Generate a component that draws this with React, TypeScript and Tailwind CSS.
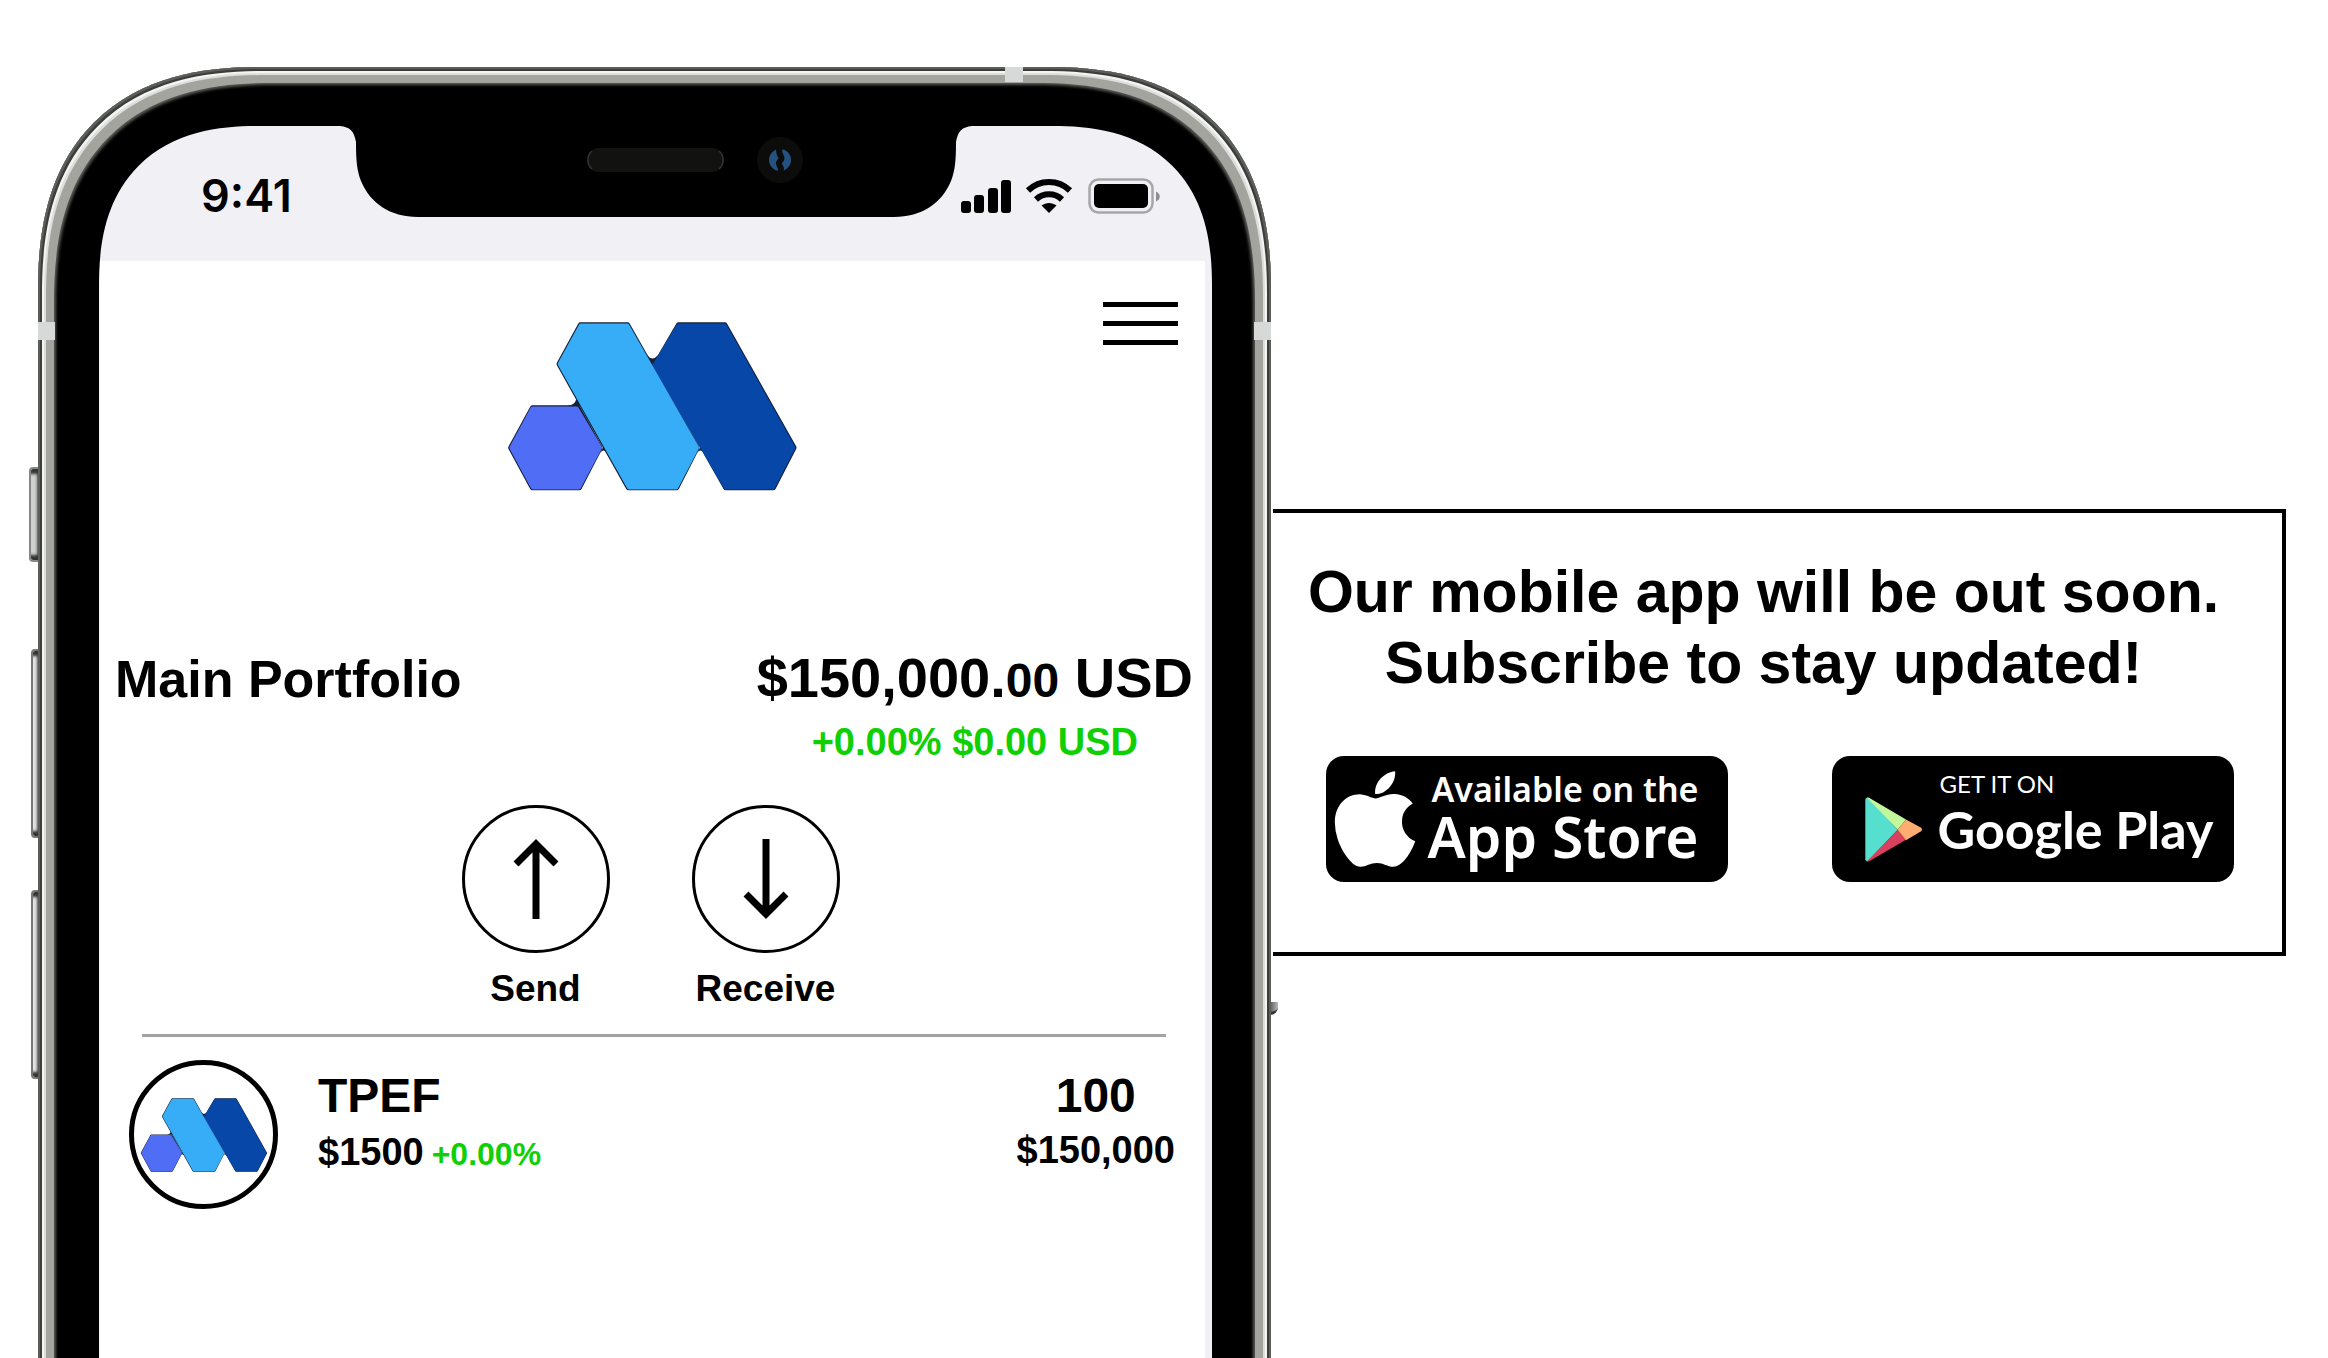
import { FaApple } from "react-icons/fa";

function MLogo({ className }: { className: string }) {
  return (
    <svg className={className} viewBox="87 66 866 507" aria-hidden="true">
      <g fill="#14213a" stroke="#14213a" strokeWidth="16" strokeLinejoin="round">
        <path d="M160 324H296L362 443L300 563H160L95 443Z" />
        <path d="M304 75H445L653 443L592 563H448L240 192Z" />
        <path d="M598 75H737L944 443L882 563H740L530 192Z" />
      </g>
      <path fill="#14213a" d="M262 318Q288 316 291 298L312 318ZM504 164Q519 186 536 166L532 200L510 186ZM360 462Q373 440 388 464L376 436ZM650 462Q664 440 679 464L668 436Z" />
      <g strokeWidth="13" strokeLinejoin="round">
        <path fill="#0747a8" stroke="#0747a8" d="M598 77H736L942 443L881 562H740L526 196Z" />
        <path fill="#506df6" stroke="#506df6" d="M160 326H292L362 443L299 562H161L97 443Z" />
        <path fill="#36adf6" stroke="#36adf6" d="M305 77H444L653 443L591 562H450L242 192Z" />
      </g>
    </svg>
  );
}

function Notch() {
  return (
    <svg className="h-[91px] w-[632px] shrink-0" viewBox="0 0 632 91" aria-hidden="true">
      <path d="M0 0C10 1 14 5 16 16C16 35 17 45 21 55C30 77 50 91 78 91H554C582 91 602 77 611 55C615 45 616 35 616 16C618 5 622 1 632 0Z" />
      <rect x="247" y="22" width="137" height="24" rx="12" fill="#121210" />
      <path d="M252 25A12 12 0 0 0 252 43M379 25A12 12 0 0 1 379 43" fill="none" stroke="#333" strokeWidth="1.5" />
      <circle cx="440" cy="34" r="23" fill="#0c0c0a" />
      <circle cx="440" cy="34" r="11" fill="#24517f" />
      <path d="M440 22C436 28 445 31 440 35C436 39 444 41 440 46" fill="none" stroke="#0c0c0a" strokeWidth="6" />
    </svg>
  );
}

function StatusIcons() {
  return (
    <svg className="h-9 w-[200px]" viewBox="0 0 200 36" role="img" aria-label="Signal, Wi-Fi and battery full">
      <rect x="0" y="23" width="10" height="12" rx="3" />
      <rect x="13" y="17" width="10" height="18" rx="3" />
      <rect x="27" y="10" width="10" height="25" rx="3" />
      <rect x="40" y="2" width="10" height="33" rx="3" />
      <g fill="none" stroke="#000" strokeWidth="6">
        <path d="M67 12.500A30 30 0 0 1 109 12.500" />
        <path d="M75 21.500A19 19 0 0 1 101 21.500" />
      </g>
      <path d="M88 35L80.500 27.500C85 24 91 24 95.500 27.500Z" />
      <rect x="128.500" y="1.500" width="63" height="33" rx="9" fill="none" stroke="#a6a6a8" strokeWidth="2.500" />
      <rect x="133" y="6" width="54" height="24" rx="5" />
      <path d="M195 13.500C200 15.500 200 21.500 195 23.500Z" fill="#8e8e90" />
    </svg>
  );
}

function ArrowIcon({ down = false }: { down?: boolean }) {
  return (
    <svg className="h-20 w-12" viewBox="0 0 48 80" fill="none" stroke="#000" strokeWidth="7" aria-hidden="true">
      {down ? <path d="M24 0V74M4 55L24 75L44 55" /> : <path d="M24 80V6M4 25L24 5L44 25" />}
    </svg>
  );
}

function RoundAction({ label, down }: { label: string; down?: boolean }) {
  return (
    <button type="button" className="flex w-[147px] flex-col items-center">
      <span className="flex size-[148px] items-center justify-center rounded-full border-3 border-black">
        <ArrowIcon down={down} />
      </span>
      <span className="mt-3.5 text-[37px] leading-[44px] font-bold">{label}</span>
    </button>
  );
}

function PlayLogo() {
  return (
    <svg className="h-[65px] w-[57px] shrink-0" viewBox="196 198 171 194" aria-hidden="true">
      <path fill="#56dece" d="M197 206Q197 199 205 200L294 296L205 390Q197 391 197 384Z" />
      <path fill="#c2f79c" d="M201 199Q206 198 212 202L319 265L294 296Z" />
      <path fill="#d8405f" d="M201 391Q206 392 212 388L319 326L294 296Z" />
      <path fill="#ffad70" d="M319 265L363 289Q371 295 363 301L319 327L294 296Z" />
    </svg>
  );
}

function Phone() {
  return (
    <section className="relative z-10 flex flex-col pt-[67px]" aria-label="App preview">
      <span className="absolute top-[467px] -left-[9px] h-[95px] w-3 rounded-l-sm border-2 border-[#888] bg-[#cfd0d0] shadow-[inset_-4px_8px_3px_-3px_#333,inset_-4px_-8px_3px_-3px_#333]" />
      <span className="absolute top-[649px] -left-[7px] h-[189px] w-2.5 rounded-l-sm border-2 border-[#777] bg-[#e2e2e4] shadow-[inset_-4px_8px_3px_-3px_#333,inset_-4px_-8px_3px_-3px_#333]" />
      <span className="absolute top-[890px] -left-[7px] h-[189px] w-2.5 rounded-l-sm border-2 border-[#777] bg-[#e2e2e4] shadow-[inset_-4px_8px_3px_-3px_#333,inset_-4px_-8px_3px_-3px_#333]" />
      <span className="absolute top-[1002px] -right-[7px] h-[13px] w-3 rounded-br-lg border-b-3 border-[#333] bg-gradient-to-r from-[#333] to-[#bbb]" />
      <div className="relative -mb-[30px] flex grow flex-col rounded-t-[225px] bg-black pt-[59px] pr-[59px] pl-[61px] shadow-[inset_0_0_0_2px_#5c5e5a,inset_0_0_0_4px_#3c3e3a,inset_0_0_0_6px_#f4f4f4,inset_0_0_0_8px_#dededd,inset_0_0_0_16px_#a3a49e,inset_0_0_3px_18px_#5a5b57] [corner-shape:superellipse(1.28)]">
        <span className="absolute top-0 right-[248px] h-[15px] w-[18px] bg-[#d6d9d7]" />
        <span className="absolute top-[255px] left-0 h-[18px] w-[17px] bg-[#d6d9d7]" />
        <span className="absolute top-[255px] right-0 h-[18px] w-[17px] bg-[#d6d9d7]" />
        <div className="flex grow flex-col overflow-hidden rounded-t-[160px] bg-[#f1f0f5] pr-[7px] pl-px [corner-shape:superellipse(1.28)]">
          <div className="-mr-[7px] -ml-px grid h-[135px] grid-cols-[minmax(0,1fr)_auto_minmax(0,1fr)]">
            <p className="pt-11 pl-[102px] font-['Inter',sans-serif] text-[45px] leading-[52px] font-semibold">9:41</p>
            <Notch />
            <div className="flex justify-end pt-[52px] pr-[51px]">
              <div className="shrink-0">
                <StatusIcons />
              </div>
            </div>
          </div>
          <div className="flex grow flex-col bg-white">
            <header className="grid grid-cols-[1fr_auto_1fr] items-start pt-[41px]">
              <MLogo className="col-start-2 mt-5 h-[169px] w-[289px]" />
              <button type="button" aria-label="Menu" className="mr-[27px] flex w-[75px] flex-col gap-[14px] justify-self-end">
                <span className="h-[5px] bg-black" />
                <span className="h-[5px] bg-black" />
                <span className="h-[5px] bg-black" />
              </button>
            </header>
            <div className="mt-[155px] flex items-baseline justify-between pr-3 pl-[15px] font-bold">
              <h1 className="text-[52px] leading-[64px]">Main Portfolio</h1>
              <div className="text-center">
                <p className="text-[56px] leading-[64px]">
                  $150,000.<span className="text-[48px] leading-none">00</span> USD
                </p>
                <p className="mt-2 text-[38px] leading-[48px] text-[#10d004]">+0.00% $0.00 USD</p>
              </div>
            </div>
            <div className="mt-[39px] flex justify-center gap-[83px] pr-1">
              <RoundAction label="Send" />
              <RoundAction label="Receive" down />
            </div>
            <hr className="mt-[23px] mr-[39px] ml-[42px] h-[3px] border-0 bg-[#a3a3a3]" />
            <article className="mt-[23px] flex items-start gap-10 pr-[30px] pl-[29px] font-bold">
              <span className="flex size-[149px] shrink-0 items-center justify-center rounded-full border-5 border-black">
                <MLogo className="h-[74px] w-[128px] shrink-0" />
              </span>
              <div className="grow pt-2">
                <h2 className="text-[48px] leading-[56px]">TPEF</h2>
                <p className="mt-1 text-[38px] leading-[48px]">
                  $1500<span className="ml-2 text-[32px] leading-none text-[#10d004]">+0.00%</span>
                </p>
              </div>
              <div className="pt-2 text-center">
                <p className="text-[48px] leading-[56px]">100</p>
                <p className="mt-0.5 text-[38px] leading-[48px]">$150,000</p>
              </div>
            </article>
          </div>
        </div>
      </div>
    </section>
  );
}

function ComingSoon() {
  return (
    <section className="mt-[509px] ml-0.5 flex flex-col items-center self-start border-4 border-l-0 border-black bg-white pt-[44px] pb-[70px]">
      <h2 className="pr-7 text-center text-[59px] leading-[71px] font-bold">
        Our mobile app will be out soon.
        <br />
        Subscribe to stay updated!
      </h2>
      <div className="mt-[57px] flex gap-[104px] pl-1 text-white">
        <a href="#app-store" className="flex h-[126px] w-[402px] items-center rounded-[18px] bg-black pl-2">
          <FaApple className="h-[110px] w-[82px] shrink-0" aria-hidden="true" />
          <span className="ml-3 flex flex-col pb-1 font-['Noto_Sans',sans-serif] whitespace-nowrap">
            <span className="pl-1 text-[34px] leading-[38px] font-semibold">Available on the</span>
            <span className="text-[57px] leading-[56px] font-semibold">App Store</span>
          </span>
        </a>
        <a href="#google-play" className="flex h-[126px] w-[402px] items-center rounded-[18px] bg-black pl-[33px]">
          <span className="pt-5">
            <PlayLogo />
          </span>
          <span className="ml-4 flex flex-col pb-2 font-['Lato',sans-serif] whitespace-nowrap">
            <span className="pl-0.5 text-[24px] leading-[28px]">GET IT ON</span>
            <span className="text-[52px] leading-[62px] font-bold">Google Play</span>
          </span>
        </a>
      </div>
    </section>
  );
}

export default function App() {
  return (
    <main className="grid min-h-screen grid-cols-[1233fr_1015fr] overflow-hidden bg-white pr-[42px] pl-[38px] font-['Liberation_Sans',Arial,sans-serif] text-black">
      <Phone />
      <ComingSoon />
    </main>
  );
}
